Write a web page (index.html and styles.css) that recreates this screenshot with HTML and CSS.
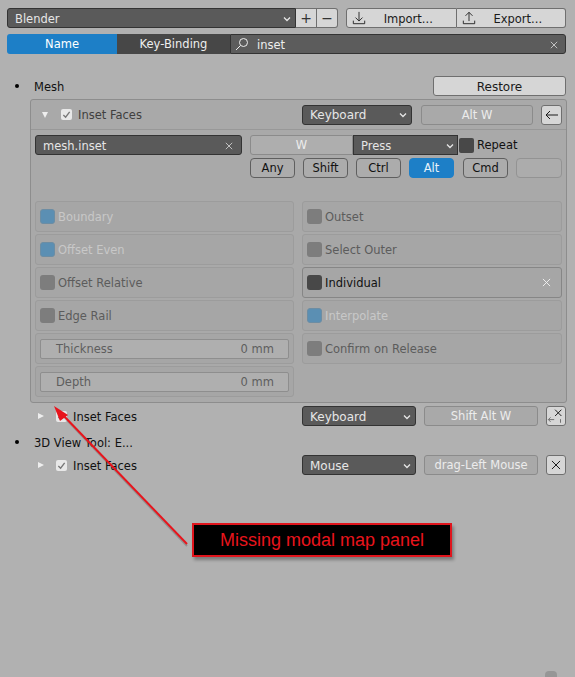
FILE: index.html
```html
<!DOCTYPE html>
<html lang="en">
<head>
<meta charset="utf-8">
<title>Blender Keymap</title>
<link rel="stylesheet" href="styles.css">
</head>
<body>
<div class="page">
  <div class="toolbar">
    <div class="btn dark preset"><span>Blender</span><svg class="chev" viewBox="0 0 8 6"><path d="M1 1.500 4 4.500 7 1.500"/></svg></div>
    <div class="join pm"><div class="btn light sq">+</div><div class="btn light sq">−</div></div>
    <div class="join io">
      <div class="btn light io-b"><svg class="io-i" viewBox="0 0 16 16"><path d="M8 1V11M4 7.500 8 11.500 12 7.500M1.500 11V14.500H14.500V11"/></svg><span>Import...</span></div>
      <div class="btn light io-b"><svg class="io-i" viewBox="0 0 16 16"><path d="M8 11.500V1.500M4 5.500 8 1.500 12 5.500M1.500 11V14.500H14.500V11"/></svg><span>Export...</span></div>
    </div>
  </div>
  <div class="searchbar">
    <div class="tab active">Name</div>
    <div class="tab">Key-Binding</div>
    <div class="search">
      <svg class="mag" viewBox="0 0 14 14"><circle cx="8.500" cy="5.500" r="4"/><path d="M5.500 8.500 1 13"/></svg>
      <span class="grow">inset</span>
      <svg class="x light-x" viewBox="0 0 10 10"><path d="M1 1 9 9M9 1 1 9"/></svg>
    </div>
  </div>

  <div class="group-row first">
    <i class="dot"></i><span class="grow">Mesh</span>
    <div class="btn light restore">Restore</div>
  </div>

  <section class="panel">
    <header class="panel-head">
      <svg class="tri down" viewBox="0 0 8 8"><path d="M1 1H7L4 7Z"/></svg>
      <span class="check"><svg viewBox="0 0 10 10"><path d="M1.500 5.500 4 8 8.500 2"/></svg></span>
      <span class="head-name grow">Inset Faces</span>
      <div class="btn dark kind k1"><span>Keyboard</span><svg class="chev" viewBox="0 0 8 6"><path d="M1 1.500 4 4.500 7 1.500"/></svg></div>
      <div class="btn field key k2">Alt W</div>
      <div class="btn light icon"><svg class="arrow-i" viewBox="0 0 14 10"><path d="M13 5H1M5 1 1 5 5 9"/></svg></div>
    </header>
    <div class="panel-body">
      <div class="op-row">
        <div class="btn dark op"><span class="grow">mesh.inset</span><svg class="x light-x" viewBox="0 0 10 10"><path d="M1 1 9 9M9 1 1 9"/></svg></div>
        <div class="key-col">
          <div class="key-top">
            <div class="btn field w">W</div>
            <div class="btn dark press"><span>Press</span><svg class="chev" viewBox="0 0 8 6"><path d="M1 1.500 4 4.500 7 1.500"/></svg></div>
            <span class="box off"></span><span class="repeat">Repeat</span>
          </div>
          <div class="mods">
            <div class="mod">Any</div>
            <div class="mod">Shift</div>
            <div class="mod">Ctrl</div>
            <div class="mod on">Alt</div>
            <div class="mod">Cmd</div>
            <div class="mod blank"></div>
          </div>
        </div>
      </div>
      <div class="props">
        <div class="prop"><span class="box blue"></span><span class="faint">Boundary</span></div>
        <div class="prop"><span class="box gray"></span><span class="muted">Outset</span></div>
        <div class="prop"><span class="box blue"></span><span class="faint">Offset Even</span></div>
        <div class="prop"><span class="box gray"></span><span class="muted">Select Outer</span></div>
        <div class="prop"><span class="box gray"></span><span class="muted">Offset Relative</span></div>
        <div class="prop set"><span class="box off"></span><span class="grow strong">Individual</span><svg class="x white-x" viewBox="0 0 10 10"><path d="M1 1 9 9M9 1 1 9"/></svg></div>
        <div class="prop"><span class="box gray"></span><span class="muted">Edge Rail</span></div>
        <div class="prop"><span class="box blue"></span><span class="faint">Interpolate</span></div>
        <div class="prop num"><div class="numf"><span>Thickness</span><span>0 mm</span></div></div>
        <div class="prop"><span class="box gray"></span><span class="muted">Confirm on Release</span></div>
        <div class="prop num"><div class="numf"><span>Depth</span><span>0 mm</span></div></div>
      </div>
    </div>
  </section>

  <div class="item first-item">
    <svg class="tri" viewBox="0 0 8 8"><path d="M1 1V7L7 4Z"/></svg>
    <span class="check"><svg viewBox="0 0 10 10"><path d="M1.500 5.500 4 8 8.500 2"/></svg></span>
    <span class="grow">Inset Faces</span>
    <div class="btn dark kind k3"><span>Keyboard</span><svg class="chev" viewBox="0 0 8 6"><path d="M1 1.500 4 4.500 7 1.500"/></svg></div>
    <div class="btn field key k4">Shift Alt W</div>
    <div class="btn light icon last">
      <svg viewBox="0 0 20 20"><path class="thin" d="M2 14H8M4 11.500 1.500 14 4 16.500M15 13.500V17.500"/><path d="M9 3 16 10M16 3 9 10"/></svg>
    </div>
  </div>

  <div class="group-row second"><i class="dot"></i><span>3D View Tool: E...</span></div>

  <div class="item">
    <svg class="tri" viewBox="0 0 8 8"><path d="M1 1V7L7 4Z"/></svg>
    <span class="check"><svg viewBox="0 0 10 10"><path d="M1.500 5.500 4 8 8.500 2"/></svg></span>
    <span class="grow">Inset Faces</span>
    <div class="btn dark kind k3"><span>Mouse</span><svg class="chev" viewBox="0 0 8 6"><path d="M1 1.500 4 4.500 7 1.500"/></svg></div>
    <div class="btn field key k4">drag-Left Mouse</div>
    <div class="btn light icon last"><svg viewBox="0 0 20 20"><path d="M5.500 5.500 14.500 14.500M14.500 5.500 5.500 14.500"/></svg></div>
  </div>

  <svg class="annot-arrow" viewBox="0 0 575 677">
    <path class="a-shadow" d="M187 546 64 417"/>
    <path class="a-line" d="M187 544 62 414"/>
    <path class="a-head" d="M54 406 68 415 60 421Z"/>
  </svg>
  <div class="callout">Missing modal map panel</div>
  <span class="corner"></span>
</div>
</body>
</html>
```
FILE: styles.css
```css
* { box-sizing: border-box; }
html, body { margin: 0; padding: 0; }
body { background: #b1b1b1; }
.page {
  position: relative;
  width: 575px;
  height: 677px;
  overflow: hidden;
  padding: 8px 9px 0 7px;
  background: #b1b1b1;
  color: #111;
  font: 11.500px/20px "DejaVu Sans", sans-serif;
}
.grow { flex: 1; min-width: 0; }
svg { display: block; fill: none; stroke: currentColor; }

.btn {
  display: flex;
  align-items: center;
  height: 20px;
  border: 1px solid #6f6f6f;
  border-radius: 3px;
}
.dark { background: #5a5a5a; color: #e6e6e6; border-color: #333; padding: 1px 4px 0 7px; justify-content: space-between; }
.light { background: #d6d6d6; color: #1a1a1a; justify-content: center; }
.field { background: #a9a9a9; color: #ececec; justify-content: center; border-color: #8b8b8b; }
.chev { width: 8px; height: 6px; stroke-width: 1.300; }

.toolbar { display: flex; height: 20px; }
.preset { width: 289px; border-radius: 3px 0 0 3px; }
.join { display: flex; }
.pm { width: 42px; }
.sq { flex: 1; border-radius: 0; font-size: 14px; border-left-width: 0; color: #333; }
.sq:last-child { border-radius: 0 3px 3px 0; }
.io { width: 220px; margin-left: 8px; }
.io-b { flex: 1; border-radius: 3px 0 0 3px; padding: 1px 5px 0 5px; justify-content: flex-start; }
.io-b:last-child { border-radius: 0 3px 3px 0; border-left-width: 0; }
.io-b span { flex: 1; text-align: center; }
.io-i { width: 14px; height: 14px; stroke-width: 1; margin-top: -1px; }

.searchbar { display: flex; height: 20px; margin-top: 6px; }
.tab { width: 110px; background: #474747; color: #eee; text-align: center; line-height: 21px; }
.tab + .tab { width: 113px; }
.tab.active { background: #1d7fc7; color: #fff; border-radius: 3px 0 0 3px; }
.search {
  flex: 1;
  display: flex;
  align-items: center;
  gap: 8px;
  background: #5c5c5c;
  color: #eee;
  border: 1px solid #333;
  border-radius: 0 3px 3px 0;
  padding: 1px 7px 0 4px;
}
.mag { width: 14px; height: 14px; stroke-width: 1; margin-top: -1px; }
.x { width: 8px; height: 8px; stroke-width: 1; }
.light-x { color: #ddd; }
.white-x { color: #f4f4f4; margin-right: 10px; width: 9px; height: 9px; }

.group-row { display: flex; align-items: center; height: 20px; padding-left: 27px; position: relative; }
.group-row > span { padding-top: 1px; }
.group-row.first { margin-top: 22px; }
.group-row.second { margin-top: 6px; }
.dot { position: absolute; left: 8px; top: 8px; width: 4px; height: 4px; border-radius: 50%; background: #000; }
.restore { width: 133px; font-size: 12px; padding-top: 1px; }

.panel {
  width: 537px;
  height: 304px;
  margin: 3px 0 0 23px;
  background: #a9a9a9;
  border: 1px solid #8d8d8d;
  border-radius: 3px;
}
.panel-head {
  display: flex;
  align-items: center;
  height: 30px;
  padding: 0 4px 0 10px;
  border-bottom: 1px solid #989898;
  color: #3c3c3c;
}
.tri { width: 8px; height: 8px; fill: #eee; stroke: none; flex: none; }
.check {
  flex: none;
  display: flex;
  align-items: center;
  justify-content: center;
  width: 11px;
  height: 11px;
  margin: 0 6px 0 12px;
  background: #e8e8e8;
  border-radius: 2px;
  color: #777;
}
.check svg { width: 9px; height: 9px; stroke-width: 1.500; }
.head-name { color: #3f3f3f; }
.kind span { font-size: 12px; }
.kind.k1 { width: 110px; }
.key.k2 { width: 112px; margin-left: 9px; }
.icon { width: 21px; margin-left: 8px; flex: none; padding: 0; }
.arrow-i { width: 14px; height: 10px; stroke-width: 1; }

.panel-body { padding: 5px 4px 0 4px; }
.op-row { display: flex; }
.op { width: 207px; padding-right: 8px; }
.key-col { width: 312px; margin-left: 8px; }
.key-top { display: flex; align-items: center; height: 20px; }
.w { width: 103px; border-radius: 3px 0 0 3px; background: #aeaeae; }
.press { width: 105px; border-radius: 0; padding-right: 3px; }
.box { flex: none; display: block; width: 15px; height: 15px; border-radius: 3px; margin-right: 3px; }
.key-top .box { margin-left: 1px; background: #484848; border-radius: 2px; }
.mods { display: flex; gap: 8px; margin-top: 3px; }
.mod {
  width: 45px;
  height: 20px;
  text-align: center;
  line-height: 18px;
  background: #acacac;
  border: 1px solid #5f5f5f;
  border-radius: 4px;
}
.mod.on { background: #1d7fc7; border-color: #1d7fc7; color: #e8f2fa; margin-right: 1px; }
.mod.blank { flex: 1; border-color: #939393; }

.props {
  display: grid;
  grid-template-columns: 259px 260px;
  grid-auto-rows: 31px;
  column-gap: 8px;
  row-gap: 2px;
  margin-top: 23px;
}
.prop {
  display: flex;
  align-items: center;
  padding-left: 4px;
  background: #a6a6a6;
  border: 1px solid #9c9c9c;
  border-radius: 3px;
}
.prop.set { border-color: #868686; }
.prop.num { padding: 0 4px; }
.numf {
  flex: 1;
  display: flex;
  justify-content: space-between;
  height: 20px;
  line-height: 18px;
  padding: 0 14px 0 15px;
  background: #afafaf;
  border: 1px solid #8e8e8e;
  border-radius: 2px;
  color: #5e5e5e;
}
.blue { background: #5b8fb3; border: 1px solid #6d8da3; }
.gray { background: #7d7d7d; }
.off { background: #484848; }
.faint { color: #c8c8c8; }
.muted { color: #5c5c5c; }
.strong { color: #111; }

.item { display: flex; align-items: center; height: 20px; padding-left: 30px; margin-top: 3px; }
.item > .grow { padding-top: 1px; }
.item .check { margin-left: 11px; }
.kind.k3 { width: 114px; }
.key.k4 { width: 114px; margin-left: 8px; }
.icon.last { width: 20px; }
.icon.last svg { width: 18px; height: 18px; stroke-width: 1.100; }
.thin { stroke-width: .6; }

.annot-arrow { position: absolute; left: 0; top: 0; width: 575px; height: 677px; pointer-events: none; }
.a-shadow { stroke: rgba(0,0,0,.18); stroke-width: 2; }
.a-line { stroke: #e8141c; stroke-width: 2; }
.a-head { fill: #e8141c; stroke: none; }
.callout {
  position: absolute;
  left: 192px;
  top: 523px;
  width: 260px;
  height: 34px;
  padding-left: 26px;
  background: #000;
  border: 2px solid #e0151d;
  box-shadow: 2px 3px 3px rgba(0,0,0,.3);
  color: #e8141c;
  font: 18px/30px "Liberation Sans", Arial, sans-serif;
}
.corner { position: absolute; left: 545px; top: 671px; width: 12px; height: 12px; border-radius: 4px; background: #969696; }
```
